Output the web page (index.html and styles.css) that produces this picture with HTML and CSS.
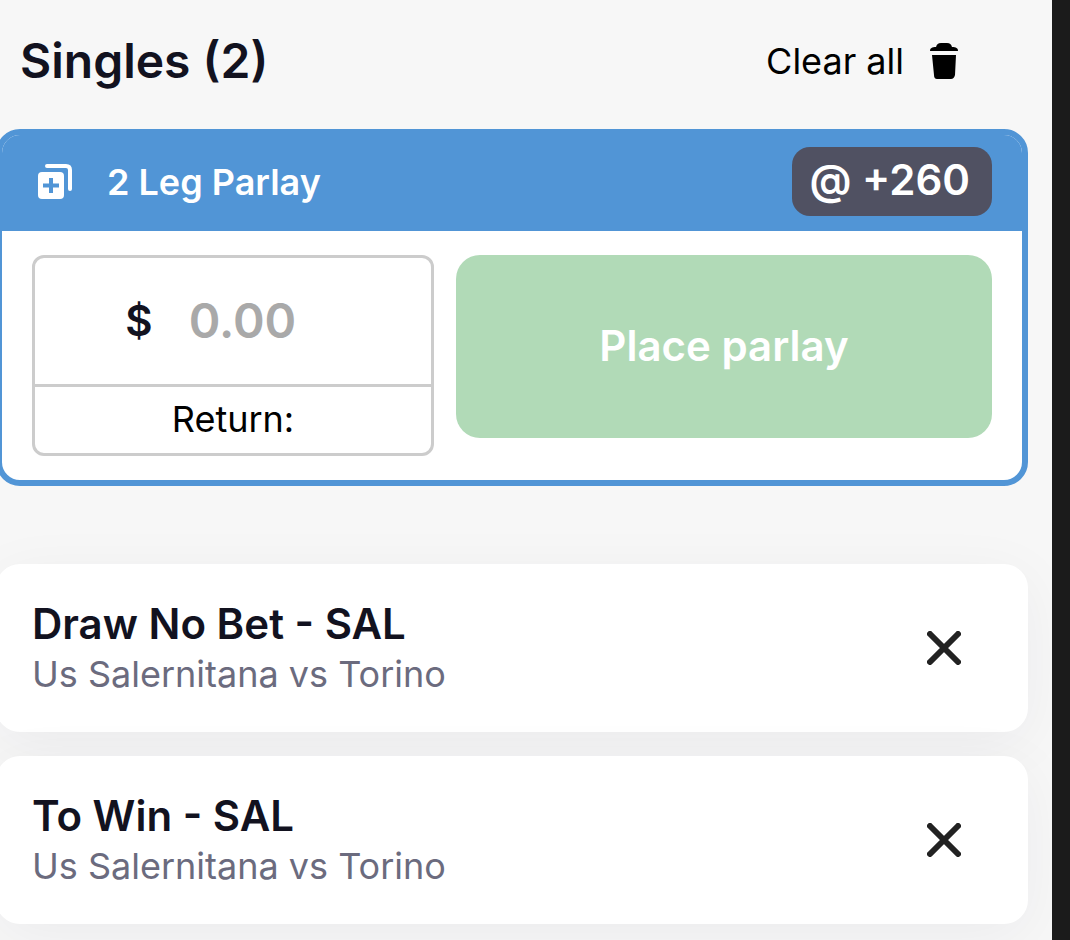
FILE: index.html
```html
<!DOCTYPE html>
<html lang="en">
<head>
    <meta charset="UTF-8">
    <meta name="viewport" content="width=device-width, initial-scale=1.0">
    <title>Bet Slip</title>
    <link rel="stylesheet" href="styles.css">
</head>
<body>

    <main class="bet-slip">
        <header class="slip-header">
            <h1 class="slip-title">Singles (2)</h1>
            <button class="clear-button" type="button">
                Clear all
                <svg class="trash-icon" viewBox="0 0 28 36" aria-hidden="true">
                    <path d="M0 8C0 5 2 4 6 4C7 1 8 0 11 0H17C20 0 21 1 22 4C26 4 28 5 28 8Z"/>
                    <path d="M2 12H26L25 32Q24 36 21 36H7Q4 36 4 32Z"/>
                </svg>
            </button>
        </header>

        <section class="parlay">
            <div class="parlay-header">
                <svg class="parlay-icon" viewBox="0 0 36 36" aria-hidden="true">
                    <path d="M10 2H29Q33 2 33 6V25" fill="none" stroke="#fff" stroke-width="4" stroke-linecap="round"/>
                    <rect x="1" y="8" width="26" height="27" rx="4" fill="#fff"/>
                    <path d="M14 14V29M6 21.5H22" stroke="#5195d6" stroke-width="4"/>
                </svg>
                <h2 class="parlay-title">2 Leg Parlay</h2>
                <span class="odds">@ +260</span>
            </div>
            <form class="parlay-body">
                <div class="stake">
                    <label class="stake-row">
                        <span class="currency">$</span>
                        <input class="stake-input" type="text" inputmode="decimal" placeholder="0.00" aria-label="Stake">
                    </label>
                    <div class="return-row">Return:</div>
                </div>
                <button class="place-button" type="submit" disabled>Place parlay</button>
            </form>
        </section>

        <ul class="singles">
            <li class="single">
                <div class="single-text">
                    <h3 class="single-title">Draw No Bet - SAL</h3>
                    <p class="single-match">Us Salernitana vs Torino</p>
                </div>
                <button class="remove-button" type="button" aria-label="Remove Draw No Bet - SAL">
                    <svg class="remove-icon" viewBox="0 0 34 34" aria-hidden="true">
                        <path d="M3 3L31 31M31 3L3 31"/>
                    </svg>
                </button>
            </li>
            <li class="single">
                <div class="single-text">
                    <h3 class="single-title">To Win - SAL</h3>
                    <p class="single-match">Us Salernitana vs Torino</p>
                </div>
                <button class="remove-button" type="button" aria-label="Remove To Win - SAL">
                    <svg class="remove-icon" viewBox="0 0 34 34" aria-hidden="true">
                        <path d="M3 3L31 31M31 3L3 31"/>
                    </svg>
                </button>
            </li>
        </ul>
    </main>

</body>
</html>
```
FILE: styles.css
```css
* {
    box-sizing: border-box;
}

body {
    margin: 0;
    min-height: 100vh;
    border-right: 18px solid #1b1b1b;
    background-color: #f7f7f7;
    color: #12121f;
    font-family: Inter, "Liberation Sans", sans-serif;
    overflow-x: hidden;
}

h1, h2, h3, p, ul {
    margin: 0;
    padding: 0;
}

button {
    border: none;
    font-family: inherit;
    cursor: pointer;
}

.bet-slip {
    margin-left: -4px;
    padding: 30px 24px 16px 0;
}

.slip-header {
    display: flex;
    justify-content: space-between;
    align-items: center;
    padding: 0 70px 37px 24px;
}

.slip-title {
    font-size: 48px;
    font-weight: 600;
    line-height: 62px;
}

.clear-button {
    display: flex;
    align-items: center;
    gap: 26px;
    padding: 0;
    background: none;
    color: #000;
    font-size: 36px;
    line-height: 44px;
}

.trash-icon {
    width: 28px;
    height: 36px;
}

.parlay {
    border: 6px solid #5195d6;
    border-radius: 24px;
    background-color: #fff;
}

.parlay-header {
    display: flex;
    align-items: center;
    padding: 12px 30px 15px 35px;
    border-radius: 18px 18px 0 0;
    background-color: #5195d6;
    color: #fff;
}

.parlay-icon {
    width: 36px;
    height: 36px;
}

.parlay-title {
    flex: 1;
    padding-left: 34px;
    font-size: 36px;
    font-weight: 600;
}

.odds {
    padding: 0 22px 4px 18px;
    border-radius: 18px;
    background-color: #505162;
    font-size: 42px;
    font-weight: 600;
    line-height: 65px;
}

.parlay-body {
    display: grid;
    grid-template-columns: 3fr 4fr;
    align-items: start;
    gap: 22px;
    padding: 24px 30px;
}

.stake {
    border: 3px solid #ccc;
    border-radius: 12px;
}

.stake-row {
    display: flex;
    align-items: center;
    justify-content: center;
    gap: 36px;
    height: 126px;
    padding-bottom: 2px;
}

.currency {
    font-size: 42px;
    font-weight: 600;
}

.stake-input {
    width: 152px;
    padding: 0;
    border: none;
    outline: none;
    background: none;
    color: #12121f;
    font-family: inherit;
    font-size: 48px;
    font-weight: 600;
}

.stake-input::placeholder {
    color: #a9a9a9;
    opacity: 1;
}

.return-row {
    padding-bottom: 2px;
    border-top: 3px solid #ccc;
    color: #000;
    font-size: 36px;
    line-height: 64px;
    text-align: center;
}

.place-button {
    height: 183px;
    padding-bottom: 4px;
    border-radius: 24px;
    background-color: #b1dab7;
    color: #fff;
    font-size: 42px;
    font-weight: 600;
}

.singles {
    display: flex;
    flex-direction: column;
    gap: 24px;
    margin-top: 78px;
    list-style: none;
}

.single {
    display: flex;
    justify-content: space-between;
    align-items: center;
    padding: 34px 67px 34px 36px;
    border-radius: 24px;
    background-color: #fff;
    box-shadow: 0 12px 60px rgba(18, 18, 50, 0.05);
}

.single-title {
    font-size: 42px;
    font-weight: 600;
    line-height: 52px;
}

.single-match {
    color: #6b6b7e;
    font-size: 36px;
    line-height: 48px;
}

.remove-button {
    padding: 0;
    background: none;
}

.remove-icon {
    display: block;
    width: 34px;
    height: 34px;
    fill: none;
    stroke: #222;
    stroke-width: 6;
    stroke-linecap: round;
}
```
